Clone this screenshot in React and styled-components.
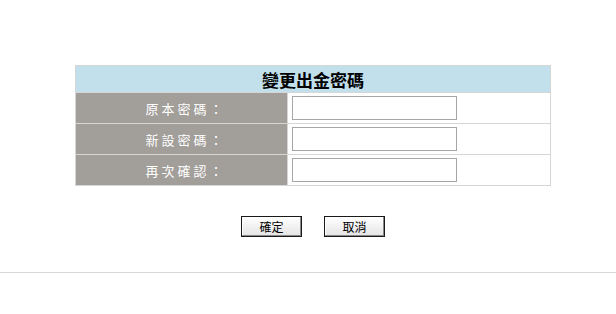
import React from "react";
import styled, { createGlobalStyle } from "styled-components";

const Global = createGlobalStyle`
  html, body { margin: 0; padding: 0; background: #ffffff; }
  body { font-family: "Noto Sans CJK TC", "Noto Sans", sans-serif; }
`;

const Page = styled.div`
  width: 616px;
  padding-top: 65px;
`;

const Form = styled.div`
  margin-left: 75px;
  width: 474px;
  display: grid;
  grid-template-columns: 211px 1fr;
  grid-template-rows: 26px repeat(3, 30px);
  gap: 1px;
  padding: 1px;
  background: #d6d6d6;
`;

const Title = styled.div`
  grid-column: 1 / -1;
  background: #c2e0ec;
  display: flex;
  align-items: center;
  justify-content: center;
  font-size: 17px;
  font-weight: bold;
  color: #000;
  line-height: 1;
`;

const Label = styled.div`
  background: #a29e9a;
  color: #ffffff;
  font-size: 13px;
  letter-spacing: 3px;
  display: flex;
  align-items: center;
  justify-content: center;
  padding-left: 8px;
`;

const Field = styled.div`
  background: #ffffff;
  display: flex;
  align-items: center;
  padding-left: 4px;
`;

const Input = styled.input`
  box-sizing: border-box;
  width: 165px;
  height: 24px;
  border: 1px solid #a6a6a6;
  margin: 0;
  padding: 0 3px;
  outline: none;
  background: #fff;
`;

const Actions = styled.div`
  display: flex;
  justify-content: center;
  gap: 22px;
  margin-top: 30px;
  padding-left: 10px;
`;

const Button = styled.button`
  box-sizing: border-box;
  width: 61px;
  height: 21px;
  padding: 0;
  margin: 0;
  font-family: "Noto Sans CJK TC", sans-serif;
  font-size: 12px;
  line-height: 1;
  color: #000;
  background: linear-gradient(#ffffff, #e4e4e4);
  border: 1px solid #1a1a1a;
  box-shadow: inset -1px -1px 0 #8a8a8a, inset 1px 1px 0 #ffffff;
`;

const Rule = styled.hr`
  margin: 35px 0 0 0;
  border: 0;
  border-top: 1px solid #d8d8d8;
  height: 0;
`;

const fields = ["原本密碼：", "新設密碼：", "再次確認："];

export default function App() {
  return (
    <Page>
      <Global />
      <Form>
        <Title>變更出金密碼</Title>
        {fields.map((f) => (
          <React.Fragment key={f}>
            <Label>{f}</Label>
            <Field>
              <Input type="password" />
            </Field>
          </React.Fragment>
        ))}
      </Form>
      <Actions>
        <Button>確定</Button>
        <Button>取消</Button>
      </Actions>
      <Rule />
    </Page>
  );
}
